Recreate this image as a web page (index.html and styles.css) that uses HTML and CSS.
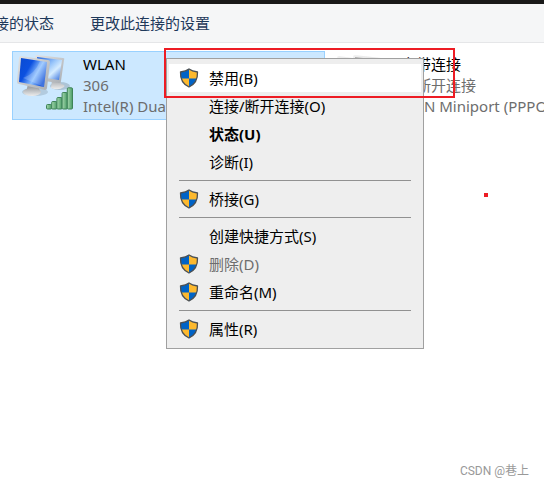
FILE: index.html
```html
<!DOCTYPE html>
<html lang="zh-CN">
<head>
  <meta charset="UTF-8">
  <meta name="viewport" content="width=device-width, initial-scale=1.0">
  <title>网络连接</title>
  <link rel="stylesheet" href="styles.css">
</head>
<body>
  <svg class="defs" aria-hidden="true">
    <defs>
      <linearGradient id="screen" x1="0" y1="0" x2="1" y2="0.600">
        <stop offset="0" stop-color="#0a4ad0"/>
        <stop offset=".4" stop-color="#0c50e0"/>
        <stop offset=".7" stop-color="#8cc0ff"/>
        <stop offset="1" stop-color="#1150d8"/>
      </linearGradient>
      <linearGradient id="screenBack" x1="0" y1="0" x2="1" y2="1">
        <stop offset="0" stop-color="#1a5fe0"/>
        <stop offset=".45" stop-color="#9cc8fb"/>
        <stop offset=".65" stop-color="#d5ecff"/>
        <stop offset="1" stop-color="#2a68dc"/>
      </linearGradient>
      <linearGradient id="frame" x1="0" y1="0" x2="1" y2="1">
        <stop offset="0" stop-color="#e4e4e4"/>
        <stop offset="1" stop-color="#a9adb2"/>
      </linearGradient>
      <linearGradient id="stand" x1="0" y1="0" x2="0" y2="1">
        <stop offset="0" stop-color="#a4a8ac"/>
        <stop offset="1" stop-color="#eeeeee"/>
      </linearGradient>
      <linearGradient id="bar" x1="0" y1="0" x2="1" y2="0">
        <stop offset="0" stop-color="#a5d8ae"/>
        <stop offset="1" stop-color="#4a9c66"/>
      </linearGradient>
      <symbol id="shield" viewBox="0 0 20 20">
        <path fill="#fdb92e" d="M10 1C8 2.500 5 3.500 1.500 4c-.3 7 2 12 8.500 15 6.500-3 8.800-8 8.500-15C15 3.500 12 2.500 10 1z"/>
        <path fill="#0063c6" d="M10 1C8 2.500 5 3.500 1.500 4c0 2.500.2 4.500.8 6.500H10zM10 10.500h7.700C16.500 14.500 14 17.200 10 19z"/>
        <path fill="none" stroke="#4b5055" stroke-width="1.300" stroke-linejoin="round" d="M10 1C8 2.500 5 3.500 1.500 4c-.3 7 2 12 8.500 15 6.500-3 8.800-8 8.500-15C15 3.500 12 2.500 10 1z"/>
      </symbol>
      <symbol id="computers" viewBox="0 0 60 58">
        <ellipse cx="43" cy="32" rx="10" ry="4" fill="#8d9fae" opacity=".5"/>
        <path fill="url(#stand)" d="M35 26h8l1 4q5 1 3 3-6 4-13 1z"/>
        <path fill="url(#frame)" d="M18 3q0-2 2-2l26 3q2 0 1 2l-3 21q0 2-2 2l-22-3z"/>
        <path fill="url(#screenBack)" d="M20 3l25 3-3 20-20-3z"/>
        <ellipse cx="18" cy="38" rx="13" ry="4" fill="#8d9fae" opacity=".4"/>
        <path fill="#a0a4a8" d="M11 30l10 1 2 7H9z"/>
        <ellipse cx="15" cy="38" rx="9" ry="4" fill="url(#stand)"/>
        <path fill="url(#frame)" d="M2 4q0-2 2-2l27 4q2 0 2 2l-3 26q0 2-2 2L2 30q-2 0-2-2z"/>
        <path fill="url(#screen)" d="M4 4l26 4-3 25L2 28z"/>
        <path fill="#ffffff" opacity=".2" d="M23 7l7 1-3 25L6 24q12-4 17-17z"/>
      </symbol>
      <symbol id="signal" viewBox="0 0 27 23">
        <g fill="url(#bar)" stroke="#3f8459" stroke-width="1">
          <rect x=".5" y="17.500" width="5.200" height="4.500" rx="1"/>
          <rect x="5.700" y="14.500" width="5.200" height="7.500" rx="1"/>
          <rect x="10.900" y="10.500" width="5.200" height="11.500" rx="1"/>
          <rect x="16.100" y="5.500" width="5.200" height="16.500" rx="1"/>
          <rect x="21.300" y=".8" width="5.200" height="21.200" rx="1"/>
        </g>
      </symbol>
    </defs>
  </svg>

  <div class="titlebar"></div>
  <nav class="toolbar">
    <button class="tool" type="button">查看此连接的状态</button>
    <button class="tool" type="button">更改此连接的设置</button>
  </nav>

  <main class="connections">
    <div class="connection selected">
      <div class="conn-icon">
        <svg class="computers"><use href="#computers"/></svg>
        <svg class="signal"><use href="#signal"/></svg>
      </div>
      <div class="conn-text">
        <div class="name">WLAN</div>
        <div>306</div>
        <div>Intel(R) Dual</div>
      </div>
    </div>
    <div class="connection">
      <div class="conn-icon offline">
        <svg class="computers"><use href="#computers"/></svg>
      </div>
      <div class="conn-text">
        <div class="name">宽带连接</div>
        <div>已断开连接</div>
        <div>WAN Miniport (PPPOE)</div>
      </div>
    </div>
  </main>

  <div class="menu" role="menu">
    <button class="item active" role="menuitem"><svg class="shield"><use href="#shield"/></svg><span>禁用(B)</span></button>
    <button class="item" role="menuitem"><span>连接/断开连接(O)</span></button>
    <button class="item default" role="menuitem"><span>状态(U)</span></button>
    <button class="item" role="menuitem"><span>诊断(I)</span></button>
    <hr>
    <button class="item" role="menuitem"><svg class="shield"><use href="#shield"/></svg><span>桥接(G)</span></button>
    <hr>
    <button class="item" role="menuitem"><span>创建快捷方式(S)</span></button>
    <button class="item" role="menuitem" disabled><svg class="shield"><use href="#shield"/></svg><span>删除(D)</span></button>
    <button class="item" role="menuitem"><svg class="shield"><use href="#shield"/></svg><span>重命名(M)</span></button>
    <hr>
    <button class="item" role="menuitem"><svg class="shield"><use href="#shield"/></svg><span>属性(R)</span></button>
  </div>

  <div class="mark-box"></div>
  <div class="mark-dot"></div>
  <div class="watermark">CSDN @巷上</div>
</body>
</html>
```
FILE: styles.css
```css
:root {
  --text: #000;
  --muted: #6d6d6d;
  --mark: #ed1c24;
}
* {
  box-sizing: border-box;
}
body {
  margin: 0;
  min-height: 100vh;
  position: relative;
  overflow: hidden;
  background: #fff;
  color: var(--text);
  font-family: "Noto Sans", "Noto Sans CJK SC", sans-serif;
  font-size: 15px;
  line-height: 21px;
}
button {
  border: none;
  background: none;
  padding: 0;
  font: inherit;
  color: inherit;
}
.defs {
  position: absolute;
  width: 0;
  height: 0;
}
.titlebar {
  height: 4px;
  background: #191919;
}
.toolbar {
  display: flex;
  gap: 36px;
  height: 39px;
  /* scrolled sideways, the first command is cut off */
  margin-left: -66px;
  background: #f5f6f7;
  border-bottom: 1px solid #e5e6e8;
}
.tool {
  color: #1e395b;
  white-space: nowrap;
}
.connections {
  display: flex;
  gap: 5px;
  padding: 8px 0 0 12px;
  overflow: hidden;
}
.connection {
  display: flex;
  flex: none;
  width: 313px;
  height: 69px;
  padding: 2px 4px;
  border: 1px solid transparent;
  overflow: hidden;
}
.connection.selected {
  background: #cce8ff;
  border-color: #99d1ff;
}
.conn-icon {
  position: relative;
  flex: none;
  width: 66px;
}
.computers {
  display: block;
  width: 60px;
  height: 58px;
}
.signal {
  position: absolute;
  left: 29px;
  top: 33px;
  width: 27px;
  height: 23px;
}
.offline {
  filter: grayscale(1);
  opacity: 0.5;
}
.conn-text {
  color: var(--muted);
  white-space: nowrap;
}
.conn-text .name {
  color: var(--text);
}
.menu {
  position: absolute;
  left: 166px;
  top: 58px;
  width: 258px;
  padding: 5px 2px;
  background: #eee;
  border: 1px solid #a0a0a0;
}
.item {
  display: flex;
  align-items: center;
  width: 100%;
  height: 28px;
  padding-left: 40px;
  text-align: left;
}
.item.active {
  background: #fff;
}
.item.default {
  font-weight: bold;
}
.item:disabled {
  color: var(--muted);
}
.shield {
  width: 20px;
  height: 20px;
  margin-left: -30px;
  margin-right: 10px;
}
.menu hr {
  height: 1px;
  margin: 4px 10px;
  border: none;
  background: #919191;
}
.mark-box {
  position: absolute;
  left: 164px;
  top: 48px;
  width: 291px;
  height: 50px;
  border: 2px solid var(--mark);
  pointer-events: none;
}
.mark-dot {
  position: absolute;
  left: 484px;
  top: 193px;
  width: 4px;
  height: 4px;
  background: var(--mark);
}
.watermark {
  position: absolute;
  right: 15px;
  bottom: 4px;
  color: #999;
  font-family: Roboto, "Noto Sans CJK SC", sans-serif;
  font-size: 12px;
}
```
